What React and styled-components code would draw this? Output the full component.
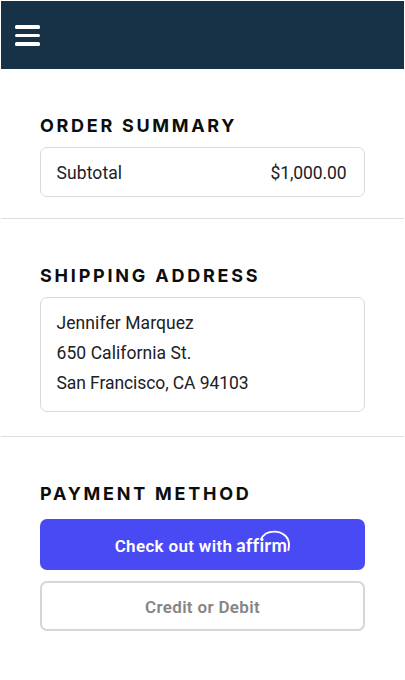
import styled, { createGlobalStyle } from 'styled-components';

const GlobalStyle = createGlobalStyle`
  * {
    box-sizing: border-box;
  }

  body {
    margin: 0;
    background: #fff;
    color: #202124;
    font-family: Roboto, 'Liberation Sans', sans-serif;
    overflow: hidden;
  }
`;

const Page = styled.div`
  height: 680px;
  padding: 1px 1px 0;
`;

const Header = styled.header`
  display: flex;
  align-items: center;
  height: 68px;
  padding: 1px 0 0 14px;
  background: #173246;
`;

const MenuButton = styled.button`
  display: flex;
  flex-direction: column;
  gap: 5px;
  padding: 0;
  border: 0;
  background: none;
`;

const MenuLine = styled.span`
  width: 25px;
  height: 3.5px;
  border-radius: 1.5px;
  background: #fff;
`;

const Section = styled.section`
  height: ${({ $height }) => $height}px;
  padding: 45px 39px 0;
  border-bottom: ${({ $last }) => ($last ? '0' : '1px solid #dedede')};
`;

const Title = styled.h2`
  margin: 0 0 ${({ $gap = 9 }) => $gap}px;
  color: #0c0d0d;
  font-family: Inter, sans-serif;
  font-size: 18px;
  font-weight: 650;
  line-height: 24px;
  letter-spacing: ${({ $spacing }) => $spacing}px;
  white-space: nowrap;
`;

const Card = styled.div`
  height: ${({ $height }) => $height}px;
  padding: 10px 17.5px 0 15.5px;
  border: 1px solid #d9d9d9;
  border-radius: 7px;
`;

const Row = styled.div`
  display: flex;
  justify-content: space-between;
`;

const Text = styled.span`
  display: block;
  font-size: 17.5px;
  line-height: 30px;
  letter-spacing: ${({ $spacing = 0 }) => $spacing}px;
  white-space: nowrap;
`;

const Button = styled.button`
  display: flex;
  align-items: center;
  justify-content: center;
  width: 100%;
  height: ${({ $primary }) => ($primary ? 51 : 50)}px;
  padding: ${({ $primary }) => ($primary ? 3 : 1)}px 0 0;
  margin-bottom: 11px;
  border: ${({ $primary }) => ($primary ? '0' : '2px solid #d6d6d6')};
  border-radius: 7px;
  background: ${({ $primary }) => ($primary ? '#4a4af4' : '#fff')};
  color: ${({ $primary }) => ($primary ? '#fff' : '#858585')};
  font-family: inherit;
  font-size: 17px;
  font-weight: 600;
  letter-spacing: 0.33px;
  white-space: nowrap;
`;

const Logo = styled.span`
  position: relative;
  top: -1px;
  width: 54px;
  margin-left: 4px;
  font-family: Lato, sans-serif;
  font-size: 18.5px;
  font-weight: 700;
  line-height: 20px;
  letter-spacing: 0.2px;
  text-align: left;
`;

const Arc = styled.svg`
  position: absolute;
  top: -5px;
  left: 0;
`;

const address = [
  { text: 'Jennifer Marquez', spacing: 0.08 },
  { text: '650 California St.', spacing: 0.07 },
  { text: 'San Francisco, CA 94103', spacing: -0.08 },
];

const App = () => {
  return (
    <>
      <GlobalStyle />
      <Page>
        <Header>
          <MenuButton aria-label="Menu">
            <MenuLine />
            <MenuLine />
            <MenuLine />
          </MenuButton>
        </Header>
        <Section $height={150}>
          <Title $spacing={2.7}>ORDER SUMMARY</Title>
          <Card $height={50}>
            <Row>
              <Text $spacing={0.1}>Subtotal</Text>
              <Text $spacing={-0.1}>$1,000.00</Text>
            </Row>
          </Card>
        </Section>
        <Section $height={218}>
          <Title $spacing={2.78}>SHIPPING ADDRESS</Title>
          <Card $height={115}>
            {address.map((line) => (
              <Text key={line.text} $spacing={line.spacing}>
                {line.text}
              </Text>
            ))}
          </Card>
        </Section>
        <Section $height={240} $last>
          <Title $spacing={2.75} $gap={13}>
            PAYMENT METHOD
          </Title>
          <Button $primary>
            Check out with
            <Logo>
              affirm
              <Arc width="56" height="24" viewBox="0 0 56 24" fill="none">
                <path
                  d="M25 9.5C27 4.8 32 1.6 38.2 1.6C46.5 1.6 53 7 53 14.5C53 17.2 52.6 18.8 52.2 20.8"
                  stroke="#fff"
                  strokeWidth="1.9"
                />
              </Arc>
            </Logo>
          </Button>
          <Button>Credit or Debit</Button>
        </Section>
      </Page>
    </>
  );
};

export default App;
